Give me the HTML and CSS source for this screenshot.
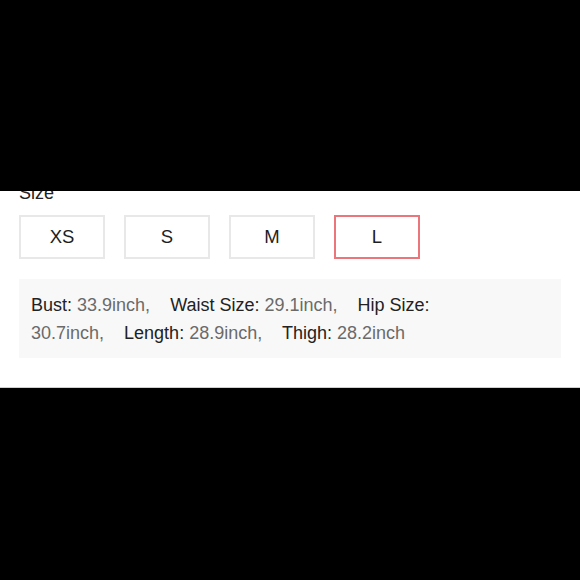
FILE: index.html
```html
<!DOCTYPE html>
<html>
<head>
<meta charset="utf-8">
<link rel="stylesheet" href="styles.css">
</head>
<body>
<div class="top"></div>
<section class="panel">
  <div class="label">Size</div>
  <div class="sizes">
    <div class="size">XS</div>
    <div class="size">S</div>
    <div class="size">M</div>
    <div class="size selected">L</div>
  </div>
  <div class="info">
    <div class="info-text"><span class="item"><span class="k">Bust:</span> <span class="v">33.9inch,</span></span> <span class="item"><span class="k">Waist Size:</span> <span class="v">29.1inch,</span></span> <span class="item"><span class="k">Hip Size:</span> <span class="v">30.7inch,</span></span> <span class="item"><span class="k">Length:</span> <span class="v">28.9inch,</span></span> <span class="item"><span class="k">Thigh:</span> <span class="v">28.2inch</span></span></div>
  </div>
</section>
<div class="bottom"></div>
</body>
</html>
```
FILE: styles.css
```css
html, body {
  margin: 0;
  padding: 0;
  background: #000;
}
body {
  width: 580px;
  height: 580px;
  overflow: hidden;
  font-family: "Liberation Sans", Arial, Helvetica, sans-serif;
}
.top {
  height: 191px;
  background: #000;
}
.panel {
  background: #fff;
  height: 196px;
  overflow: hidden;
  padding: 0 19px 0 19px;
  border-bottom: 1px solid #cfcfcf;
}
.label {
  font-size: 18px;
  line-height: 20px;
  margin-top: -8px;
  color: #222;
}
.sizes {
  display: flex;
  gap: 19px;
  margin-top: 12px;
}
.size {
  width: 86px;
  height: 44px;
  box-sizing: border-box;
  border: 2px solid #e8e8e8;
  display: flex;
  align-items: center;
  justify-content: center;
  font-size: 18.5px;
  color: #1e1e1e;
}
.size.selected {
  border-color: #ec747b;
}
.info {
  margin-top: 20px;
  width: 542px;
  box-sizing: border-box;
  background: #f8f8f8;
  padding: 12px 12px 11px 12px;
}
.info-text {
  width: 470px;
  font-size: 18px;
  line-height: 28px;
}
.item {
  margin-right: 15px;
}
.k {
  color: #222;
}
.v {
  color: #6a6a6a;
}
```
